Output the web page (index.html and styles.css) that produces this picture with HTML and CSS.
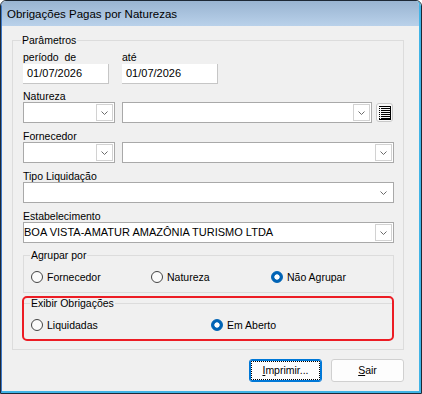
FILE: index.html
```html
<!DOCTYPE html>
<html lang="pt-BR">
<head>
<meta charset="utf-8">
<title>Obrigações Pagas por Naturezas</title>
<link rel="stylesheet" href="styles.css">
</head>
<body>
<div class="window">
  <div class="frame">
    <div class="titlebar">Obrigações Pagas por Naturezas</div>
    <div class="client">
      <fieldset class="params">
        <legend>Parâmetros</legend>
        <div class="params-body">
          <div class="date-row">
            <div class="date-field d1">
              <div class="lbl">período&nbsp; de</div>
              <div class="datebox">01/07/2026</div>
            </div>
            <div class="date-field d2">
              <div class="lbl">até</div>
              <div class="datebox">01/07/2026</div>
            </div>
          </div>

          <div class="field first">
            <div class="lbl">Natureza</div>
            <div class="ctl-row">
              <div class="combo short"><span class="val"></span><span class="dd"><svg width="7" height="4" viewBox="0 0 7 4"><polyline points="0.5,0.5 3.5,3.5 6.5,0.5" fill="none" stroke="#6b6b6b" stroke-width="1"/></svg></span></div>
              <div class="combo mid"><span class="val"></span><span class="dd"><svg width="7" height="4" viewBox="0 0 7 4"><polyline points="0.5,0.5 3.5,3.5 6.5,0.5" fill="none" stroke="#6b6b6b" stroke-width="1"/></svg></span></div>
              <button class="listbtn" type="button"><svg width="12" height="14" viewBox="0 0 12 14"><g fill="#000"><rect x="0" y="0" width="12" height="1"/><rect x="0" y="2" width="1" height="1"/><rect x="2" y="2" width="9" height="1"/><rect x="0" y="4" width="1" height="1"/><rect x="2" y="4" width="9" height="1"/><rect x="0" y="6" width="1" height="1"/><rect x="2" y="6" width="9" height="1"/><rect x="0" y="8" width="1" height="1"/><rect x="2" y="8" width="9" height="1"/><rect x="0" y="10" width="1" height="1"/><rect x="2" y="10" width="9" height="1"/><rect x="0" y="12" width="1" height="1"/><rect x="2" y="12" width="9" height="1"/><rect x="0" y="13" width="12" height="1"/><rect x="11" y="0" width="1" height="14"/></g></svg></button>
            </div>
          </div>

          <div class="field">
            <div class="lbl">Fornecedor</div>
            <div class="ctl-row">
              <div class="combo short"><span class="val"></span><span class="dd"><svg width="7" height="4" viewBox="0 0 7 4"><polyline points="0.5,0.5 3.5,3.5 6.5,0.5" fill="none" stroke="#6b6b6b" stroke-width="1"/></svg></span></div>
              <div class="combo grow"><span class="val"></span><span class="dd"><svg width="7" height="4" viewBox="0 0 7 4"><polyline points="0.5,0.5 3.5,3.5 6.5,0.5" fill="none" stroke="#6b6b6b" stroke-width="1"/></svg></span></div>
            </div>
          </div>

          <div class="field">
            <div class="lbl">Tipo Liquidação</div>
            <div class="ctl-row">
              <div class="combo grow"><span class="val"></span><span class="dd plain"><svg width="7" height="4" viewBox="0 0 7 4"><polyline points="0.5,0.5 3.5,3.5 6.5,0.5" fill="none" stroke="#6b6b6b" stroke-width="1"/></svg></span></div>
            </div>
          </div>

          <div class="field">
            <div class="lbl">Estabelecimento</div>
            <div class="ctl-row">
              <div class="combo grow"><span class="val">BOA VISTA-AMATUR AMAZÔNIA TURISMO LTDA</span><span class="dd"><svg width="7" height="4" viewBox="0 0 7 4"><polyline points="0.5,0.5 3.5,3.5 6.5,0.5" fill="none" stroke="#6b6b6b" stroke-width="1"/></svg></span></div>
            </div>
          </div>

          <fieldset class="agr">
            <legend>Agrupar por</legend>
            <div class="radios">
              <label class="radio"><span class="dot"></span>Fornecedor</label>
              <label class="radio"><span class="dot"></span>Natureza</label>
              <label class="radio"><span class="dot on"></span>Não Agrupar</label>
            </div>
          </fieldset>

          <div class="highlight">
            <fieldset class="exi">
              <legend>Exibir Obrigações</legend>
              <div class="radios">
                <label class="radio"><span class="dot"></span>Liquidadas</label>
                <label class="radio"><span class="dot on"></span>Em Aberto</label>
              </div>
            </fieldset>
          </div>
        </div>
      </fieldset>

      <div class="actions">
        <button class="btn default" type="button"><u>I</u>mprimir...</button>
        <button class="btn" type="button"><u>S</u>air</button>
      </div>
    </div>
  </div>
</div>
</body>
</html>
```
FILE: styles.css
```css
* { box-sizing: border-box; }

body {
  margin: 0;
  font-family: "Liberation Sans", Arial, sans-serif;
  font-size: 10.5px;
  color: #000;
  background: #fff;
}

.window {
  width: 422px;
  height: 394px;
  border: 1px solid #1d2835;
  border-radius: 6px 6px 0 0;
  overflow: hidden;
}

.frame {
  height: 100%;
  border-left: 1px solid #3c78c8;
  border-right: 2px solid #40b4e6;
  border-bottom: 2px solid #40b4e6;
  border-radius: 5px 5px 0 0;
  background: #f0f0f0;
  display: flex;
  flex-direction: column;
  overflow: hidden;
}

.titlebar {
  flex: none;
  height: 25px;
  padding: 2px 0 0 5px;
  line-height: 23px;
  font-size: 11.5px;
  background: linear-gradient(#99b4d1, #b9d1ea);
  white-space: nowrap;
}

.client {
  flex: 1;
  padding: 8px 0 0 10px;
}

fieldset {
  margin: 0;
  padding: 0;
  min-width: 0;
}

fieldset > legend {
  padding: 0 1px;
  line-height: 13px;
  font-size: 10.5px;
}

.params {
  width: 392px;
  border: 1px solid #dcdcdc;
}

.params > legend {
  margin-left: 8px;
}

.params-body {
  padding: 4px 9px 8px 10px;
}

.lbl {
  height: 12px;
  line-height: 12px;
  white-space: nowrap;
}

.date-row {
  display: flex;
}

.date-field.d1 {
  width: 86px;
  margin-right: 13px;
}

.date-field.d2 {
  width: 96px;
}

.datebox {
  margin-top: 1px;
  height: 20px;
  background: #fff;
  border-right: 1px solid #c6c6c6;
  border-bottom: 1px solid #c6c6c6;
  font-size: 11px;
  line-height: 19px;
  padding-left: 4px;
}

.field {
  margin-top: 7px;
}

.field.first {
  margin-top: 6px;
}

.ctl-row {
  display: flex;
}

.combo {
  display: flex;
  align-items: center;
  height: 21px;
  border: 1px solid #a9a9a9;
  background: #fff;
}

.combo.short {
  width: 92px;
  margin-right: 7px;
}

.combo.mid {
  width: 250px;
}

.combo.grow {
  flex: 1;
}

.combo .val {
  flex: 1;
  font-size: 11px;
  line-height: 19px;
  white-space: nowrap;
  overflow: hidden;
}

.combo .dd {
  flex: none;
  width: 17px;
  height: 17px;
  margin-right: 1px;
  border: 1px solid #d2d2d2;
  background: #fff;
  display: flex;
  align-items: center;
  justify-content: center;
}

.combo .dd.plain {
  border-color: transparent;
}

.listbtn {
  flex: none;
  width: 17px;
  height: 19px;
  margin: 1px 0 0 4px;
  padding: 0;
  border: 1px solid #c8c8c8;
  border-radius: 3px;
  background: #f9f9f9;
  display: flex;
  align-items: center;
  justify-content: center;
}

.agr {
  margin-top: 6px;
  border: 1px solid #dcdcdc;
}

.agr > legend,
.exi > legend {
  margin-left: 6px;
}

.radios {
  display: grid;
  padding: 9px 0 9px 7px;
}

.agr .radios {
  grid-template-columns: 120px 120px 1fr;
}

.highlight {
  margin: 3px 0 0 -1px;
  border: 2px solid #ec1c24;
  border-radius: 5px;
}

.exi {
  margin-top: -1px;
  border: 0;
  border-top: 1px solid #dcdcdc;
}

.exi .radios {
  grid-template-columns: 180px 1fr;
  padding-bottom: 8px;
}

.radio {
  display: flex;
  align-items: center;
  height: 12px;
  line-height: 12px;
  white-space: nowrap;
}

.dot {
  flex: none;
  width: 12px;
  height: 12px;
  margin-right: 4px;
  border: 1px solid #444;
  border-radius: 50%;
  background: #fbfbfb;
}

.dot.on {
  border-color: #0063b5;
  background: radial-gradient(circle, #fff 0 2.3px, #0063b5 3px);
}

.actions {
  width: 392px;
  margin-top: 9px;
  display: flex;
  justify-content: flex-end;
  gap: 9px;
}

.btn {
  width: 73px;
  height: 23px;
  padding: 0;
  border: 1px solid #d0d0d0;
  border-radius: 3px;
  background: #fdfdfd;
  font-family: "Liberation Sans", Arial, sans-serif;
  font-size: 10.5px;
  line-height: 21px;
  color: #000;
}

.btn.default {
  border-color: #0078d7;
  box-shadow: inset 0 0 0 1px #0078d7;
  outline: 1px dotted #000;
  outline-offset: -3px;
}
```
